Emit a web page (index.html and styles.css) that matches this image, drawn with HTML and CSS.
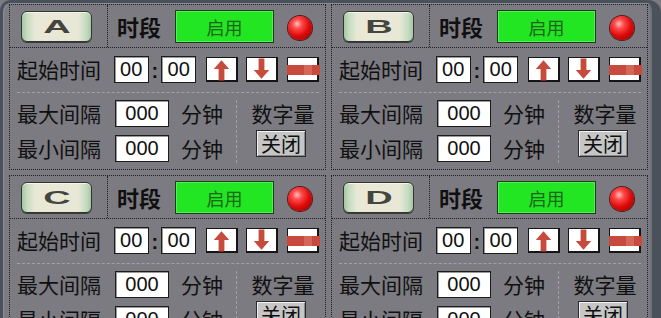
FILE: index.html
```html
<!DOCTYPE html>
<html lang="zh">
<head>
  <meta charset="UTF-8" />
  <title>时段设置</title>
  <link rel="stylesheet" href="styles.css">
</head>
<body>
  <div class="frame">
    <div class="panel-grid" id="panelGrid"></div>
  </div>

  <script>
    const tags = ['A', 'B', 'C', 'D'];

    const upIcon = `<svg viewBox="0 0 30 23" width="30" height="23"><path d="M15 2 L23 11 L18 11 L18 23 L12 23 L12 11 L7 11 Z" fill="#c64b3d"/></svg>`;
    const downIcon = `<svg viewBox="0 0 30 23" width="30" height="23"><path d="M12 0 L18 0 L18 12 L23 12 L15 21 L7 12 L12 12 Z" fill="#c64b3d"/></svg>`;
    const minusIcon = `<svg viewBox="0 0 30 23" width="30" height="23" overflow="visible"><rect x="-1" y="7" width="33" height="10" fill="#c84a3e"/><rect x="16" y="7" width="8" height="10" fill="#d5665a"/></svg>`;

    function buildPanel(tag) {
      return `
        <section class="panel">
          <div class="panel-head">
            <div class="tag-cell"><div class="tag-btn"><span>${tag}</span></div></div>
            <div class="head-main">
              <span class="head-title">时段</span>
              <span class="state-box">启用</span>
              <span class="led"></span>
            </div>
          </div>
          <div class="start-row">
            <span class="label">起始时间</span>
            <span class="field short">00</span>
            <span class="colon">:</span>
            <span class="field short">00</span>
            <span class="key up">${upIcon}</span>
            <span class="key down">${downIcon}</span>
            <span class="key minus">${minusIcon}</span>
          </div>
          <div class="interval">
            <div class="interval-left">
              <div class="interval-row">
                <span class="label">最大间隔</span>
                <span class="field wide">000</span>
                <span class="unit">分钟</span>
              </div>
              <div class="interval-row">
                <span class="label">最小间隔</span>
                <span class="field wide">000</span>
                <span class="unit">分钟</span>
              </div>
            </div>
            <div class="digital">
              <span class="digital-title">数字量</span>
              <span class="off-btn">关闭</span>
            </div>
          </div>
        </section>`;
    }

    document.getElementById('panelGrid').innerHTML = tags.map(buildPanel).join('');
  </script>
</body>
</html>
```

FILE: styles.css
```css
* {
  box-sizing: border-box;
}

html, body {
  margin: 0;
  height: 100%;
  overflow: hidden;
  background: #7b7b81;
  font-family: 'Noto Sans CJK SC', sans-serif;
  color: #101010;
}

.frame {
  width: 661px;
  height: 360px;
  border: solid #4b515b;
  border-width: 3px 9px 0 3px;
  border-radius: 11px 13px 0 0;
  background: #7b7b81;
  padding: 1px 4px 0 6px;
  box-shadow: inset 1px 1px 0 #8c8c92, inset -2px 0 0 #6e747c;
}

.panel-grid {
  display: grid;
  grid-template-columns: 317px 317px;
  grid-auto-rows: 166px;
  gap: 5px;
}

.panel {
  border: 1px dotted #1e1e22;
  display: flex;
  flex-direction: column;
}

/* header: letter button | title, state, lamp */
.panel-head {
  display: flex;
  height: 43px;
  border-bottom: 1px dotted #1e1e22;
}

.tag-cell {
  width: 98px;
  border-right: 1px dotted #1e1e22;
  display: flex;
  align-items: center;
  padding-left: 11px;
}

.tag-btn {
  width: 71px;
  height: 31px;
  border: 1px solid #2f352f;
  border-radius: 6px;
  background: linear-gradient(to right, #a7c6a5 0, #c6dcc0 5px, #d6e2cc 9px, #e9e8d7 13px, #e9e8d7 calc(100% - 13px), #d6e2cc calc(100% - 9px), #c6dcc0 calc(100% - 5px), #a7c6a5 100%);
  box-shadow: inset 0 1px 0 #f6f6ea, 0 1px 0 #3a3a3a;
  display: flex;
  align-items: center;
  justify-content: center;
}

.tag-btn span {
  display: inline-block;
  font-family: 'Liberation Sans', sans-serif;
  font-size: 19px;
  font-weight: bold;
  line-height: 1;
  color: #45453f;
  transform: scaleX(2);
}

.head-main {
  flex: 1;
  display: flex;
  align-items: center;
  padding-left: 9px;
}

.head-title {
  font-size: 22px;
  font-weight: bold;
  line-height: 1;
  width: 58px;
}

.state-box {
  width: 99px;
  height: 33px;
  border: 1px solid #1f3a1f;
  background: #22e622;
  box-shadow: inset 0 0 0 1px #55f055;
  color: #1c661c;
  font-size: 18px;
  display: flex;
  align-items: center;
  justify-content: center;
  margin-right: 14px;
  margin-top: 1px;
}

.led {
  width: 24px;
  height: 24px;
  border-radius: 50%;
  background: radial-gradient(circle at 38% 33%, #ffc0c0 0, #ff4a4a 22%, #dd0a0a 55%, #8a0000 100%);
  box-shadow: 0 0 0 1px #5a1818;
  margin-top: 3px;
}

/* start time row */
.start-row {
  display: flex;
  align-items: center;
  height: 45px;
  margin: 0 6px 0 7px;
  border-bottom: 1px dashed #a2a2a6;
  padding-bottom: 1px;
}

.label {
  font-size: 21px;
  line-height: 1;
  white-space: nowrap;
}

.start-row .label {
  width: 98px;
}

.field {
  height: 27px;
  background: #fff;
  border: 1px solid #1c1c1c;
  box-shadow: inset 1px 1px 0 #9a9a9a;
  font-family: 'Liberation Sans', sans-serif;
  font-size: 20px;
  display: flex;
  align-items: center;
  justify-content: center;
}

.field.short {
  width: 35px;
}

.field.wide {
  width: 54px;
}

.colon {
  width: 13px;
  text-align: center;
  font-family: 'Liberation Sans', sans-serif;
  font-size: 20px;
  font-weight: bold;
  line-height: 1;
  padding-top: 3px;
}

.key {
  width: 32px;
  height: 25px;
  background: #fff;
  border: 1px solid #151515;
  border-right-width: 2px;
  border-bottom-width: 2px;
  display: flex;
  margin-left: 8px;
}

.key svg {
  display: block;
}

.key.up {
  margin-left: 10px;
}

.key.minus {
  margin-left: 9px;
}

/* interval rows + digital switch */
.interval {
  flex: 1;
  display: flex;
  padding: 7px 0 6px 7px;
}

.interval-left {
  width: 220px;
  border-right: 1px dashed #a2a2a6;
  display: flex;
  flex-direction: column;
  gap: 8px;
}

.interval-row {
  display: flex;
  align-items: center;
  height: 27px;
}

.interval-row .label {
  width: 98px;
}

.unit {
  font-size: 21px;
  line-height: 1;
  margin-left: 12px;
}

.digital {
  flex: 1;
  display: flex;
  flex-direction: column;
  align-items: center;
}

.digital-title {
  font-size: 21px;
  line-height: 1;
  margin-top: 3px;
  margin-left: 4px;
}

.off-btn {
  margin-top: 6px;
  width: 50px;
  height: 27px;
  background: #c6c6c6;
  border: 1px solid #2a2a2a;
  box-shadow: inset 1px 1px 0 #f2f2f2, inset -1px -1px 0 #8a8a8a;
  font-size: 20px;
  line-height: 1;
  display: flex;
  align-items: center;
  justify-content: center;
}
```
